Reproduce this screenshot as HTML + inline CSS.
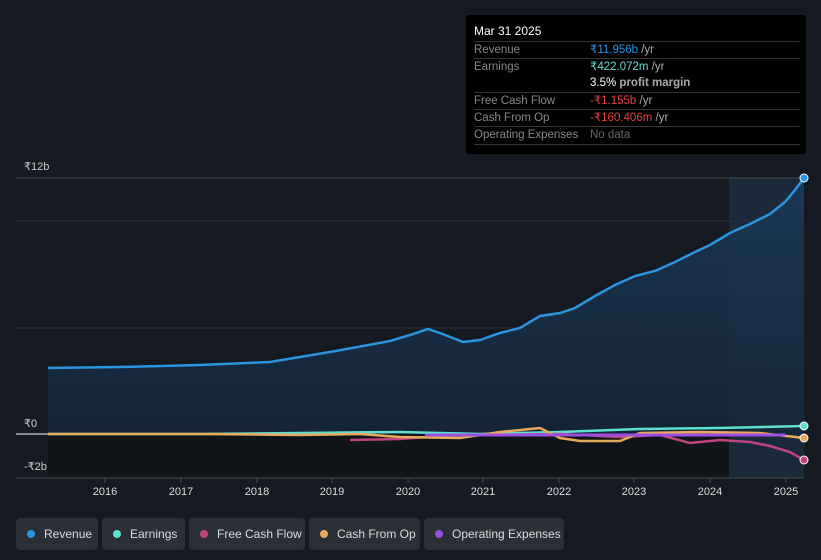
<!DOCTYPE html>
<html><head><style>
body{margin:0;background:#151a22;width:821px;height:560px;overflow:hidden;font-family:"Liberation Sans",sans-serif;position:relative}
.tt{position:absolute;left:466px;top:15px;width:340px;height:139px;background:#000;border-radius:3px;color:#888;font-size:11.5px}
.tt .h{color:#fff;font-size:12px;position:absolute;left:8px;top:9px}
.row{position:absolute;left:8px;width:326px;border-top:1px solid #333;height:17px;line-height:17px}
.row span{position:absolute;left:116px}
.leg{position:absolute;top:518px;height:32px;background:#2a2f38;border-radius:4px;color:#ddd;font-size:12px;line-height:32px;padding-left:28px;box-sizing:border-box}
.leg i{position:absolute;left:11px;top:12px;width:8px;height:8px;border-radius:50%}
.ax{position:absolute;color:#ccc;font-size:11px}
</style></head><body>
<svg width="821" height="560" style="position:absolute;left:0;top:0">
<defs><linearGradient id="g" x1="0" y1="0" x2="0" y2="1"><stop offset="0" stop-color="#1c3a58"/><stop offset="1" stop-color="#15263a"/></linearGradient></defs>
<rect x="48" y="434" width="681" height="44" fill="#111419"/>
<rect x="729" y="178" width="75" height="300" fill="#1a2a3a"/>
<line x1="16" y1="178" x2="804" y2="178" stroke="#444a52"/>
<line x1="16" y1="221" x2="804" y2="221" stroke="#2a2f38"/>
<line x1="16" y1="328" x2="804" y2="328" stroke="#2a2f38"/>
<line x1="16" y1="478" x2="804" y2="478" stroke="#444a52"/>
<path d="M48,368 L120,367 L200,365 L270,362 L330,352 L390,341 L410,335 L428,329 L440,333 L463,342 L480,340 L500,333 L520,328 L540,316 L560,313 L575,308 L595,296 L615,285 L635,276 L655,271 L675,262 L695,252 L710,245 L730,233 L750,224 L770,214 L785,202 L795,190 L804,178 L804,434 L48,434Z" fill="url(#g)" opacity="0.85"/>
<line x1="16" y1="434" x2="48" y2="434" stroke="#fff"/>
<path d="M48,368 L120,367 L200,365 L270,362 L330,352 L390,341 L410,335 L428,329 L440,333 L463,342 L480,340 L500,333 L520,328 L540,316 L560,313 L575,308 L595,296 L615,285 L635,276 L655,271 L675,262 L695,252 L710,245 L730,233 L750,224 L770,214 L785,202 L795,190 L804,178" fill="none" stroke="#2b95e0" stroke-width="2.5"/>
<path d="M48,434 L200,434 L300,433 L400,432 L480,434 L560,432 L640,429 L720,428 L804,426" fill="none" stroke="#5ee0d0" stroke-width="2.5"/>
<path d="M350,440 L400,439 L440,436 L480,435 L560,434 L620,437 L660,435 L690,443 L720,440 L750,442 L770,446 L790,452 L804,460" fill="none" stroke="#c0457e" stroke-width="2.5"/>
<path d="M48,434 L200,434 L300,435 L360,434 L400,437 L460,438 L500,432 L540,428 L560,438 L580,441 L620,441 L640,433 L700,432 L760,433 L804,438" fill="none" stroke="#e8a95a" stroke-width="2.5"/>
<path d="M425,435 L785,435" stroke="#9b4fe0" stroke-width="3"/>
<circle cx="804" cy="178" r="4" fill="#2b95e0" stroke="#fff"/>
<circle cx="804" cy="426" r="4" fill="#5ee0d0" stroke="#fff"/>
<circle cx="804" cy="438" r="4" fill="#e8a95a" stroke="#fff"/>
<circle cx="804" cy="460" r="4" fill="#c0457e" stroke="#fff"/>
<g stroke="#444a52"><line x1="105" y1="478" x2="105" y2="483"/><line x1="181" y1="478" x2="181" y2="483"/><line x1="257" y1="478" x2="257" y2="483"/><line x1="332" y1="478" x2="332" y2="483"/><line x1="408" y1="478" x2="408" y2="483"/><line x1="483" y1="478" x2="483" y2="483"/><line x1="559" y1="478" x2="559" y2="483"/><line x1="634" y1="478" x2="634" y2="483"/><line x1="710" y1="478" x2="710" y2="483"/><line x1="786" y1="478" x2="786" y2="483"/></g>
<g fill="#ddd" font-size="11" text-anchor="middle" font-family="Liberation Sans"><text x="105" y="495">2016</text><text x="181" y="495">2017</text><text x="257" y="495">2018</text><text x="332" y="495">2019</text><text x="408" y="495">2020</text><text x="483" y="495">2021</text><text x="559" y="495">2022</text><text x="634" y="495">2023</text><text x="710" y="495">2024</text><text x="786" y="495">2025</text></g>
</svg>
<div class="ax" style="left:24px;top:160px">₹12b</div>
<div class="ax" style="left:24px;top:417px">₹0</div>
<div class="ax" style="left:24px;top:460px">-₹2b</div>
<div class="tt"><div class="h">Mar 31 2025</div>
<div class="row" style="top:26px">Revenue<span style="color:#2b95e0">₹11.956b <b style="font-weight:normal;color:#aaa">/yr</b></span></div>
<div class="row" style="top:43px">Earnings<span style="color:#5ee0d0">₹422.072m <b style="font-weight:normal;color:#aaa">/yr</b></span></div>
<div class="row" style="top:60px;border-top:none"><span style="color:#fff">3.5% <b style="color:#aaa">profit margin</b></span></div>
<div class="row" style="top:77px">Free Cash Flow<span style="color:#e84040">-₹1.155b <b style="font-weight:normal;color:#aaa">/yr</b></span></div>
<div class="row" style="top:94px">Cash From Op<span style="color:#e84040">-₹160.406m <b style="font-weight:normal;color:#aaa">/yr</b></span></div>
<div class="row" style="top:111px;border-bottom:1px solid #333">Operating Expenses<span style="color:#666">No data</span></div>
</div>
<div class="leg" style="left:16px;width:82px"><i style="background:#2b95e0"></i>Revenue</div>
<div class="leg" style="left:102px;width:83px"><i style="background:#5ee0d0"></i>Earnings</div>
<div class="leg" style="left:189px;width:116px"><i style="background:#c0457e"></i>Free Cash Flow</div>
<div class="leg" style="left:309px;width:111px"><i style="background:#e8a95a"></i>Cash From Op</div>
<div class="leg" style="left:424px;width:140px"><i style="background:#9b4fe0"></i>Operating Expenses</div>
</body></html>
